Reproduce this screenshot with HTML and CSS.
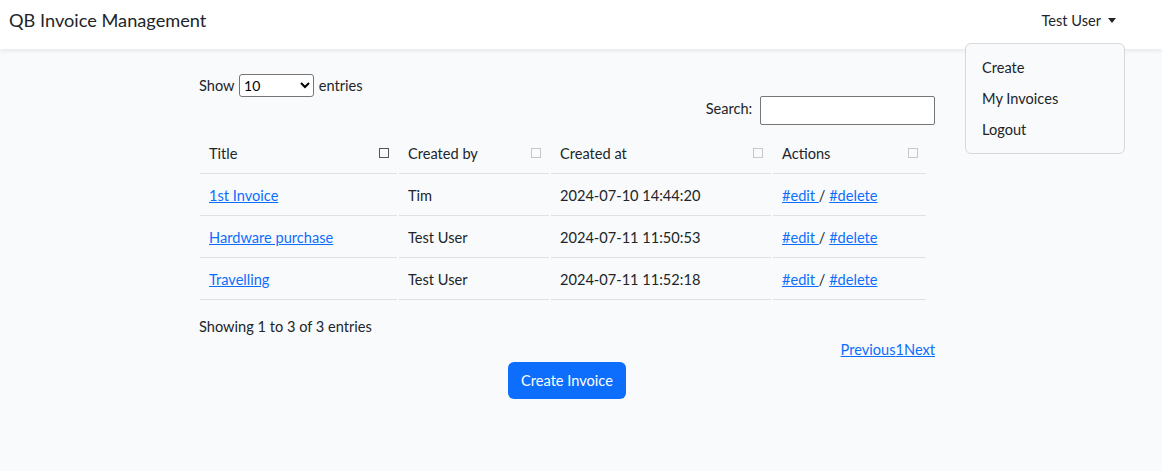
FILE: index.html
```html
<!DOCTYPE html>
<html lang="en">
<head>
<meta charset="utf-8">
<title>QB Invoice Management</title>
<link rel="stylesheet" href="styles.css">
</head>
<body>
<header class="navbar">
  <a class="brand" href="#">QB Invoice Management</a>
  <div class="nav-user">
    <a class="user-toggle" href="#">Test User <span class="caret"></span></a>
    <ul class="dropdown">
      <li><a href="#">Create</a></li>
      <li><a href="#">My Invoices</a></li>
      <li><a href="#">Logout</a></li>
    </ul>
  </div>
</header>
<main class="content">
  <div class="length">
    <label>Show <select class="len-select"><option>10</option><option>25</option><option>50</option><option>100</option></select> entries</label>
  </div>
  <div class="filter">
    <label>Search: <input class="search" type="search"></label>
  </div>
  <table class="grid">
    <thead>
      <tr>
        <th class="c1"><span>Title</span><i class="sort active"></i></th>
        <th class="c2"><span>Created by</span><i class="sort"></i></th>
        <th class="c3"><span>Created at</span><i class="sort"></i></th>
        <th class="c4"><span>Actions</span><i class="sort"></i></th>
      </tr>
    </thead>
    <tbody>
      <tr>
        <td><a href="#">1st Invoice</a></td>
        <td>Tim</td>
        <td>2024-07-10 14:44:20</td>
        <td><a href="#">#edit </a>/ <a href="#">#delete</a></td>
      </tr>
      <tr>
        <td><a href="#">Hardware purchase</a></td>
        <td>Test User</td>
        <td>2024-07-11 11:50:53</td>
        <td><a href="#">#edit </a>/ <a href="#">#delete</a></td>
      </tr>
      <tr>
        <td><a href="#">Travelling</a></td>
        <td>Test User</td>
        <td>2024-07-11 11:52:18</td>
        <td><a href="#">#edit </a>/ <a href="#">#delete</a></td>
      </tr>
    </tbody>
  </table>
  <div class="info">Showing 1 to 3 of 3 entries</div>
  <div class="paging"><a href="#">Previous</a><a href="#">1</a><a href="#">Next</a></div>
  <div class="actions"><a class="btn" href="#">Create Invoice</a></div>
</main>
</body>
</html>
```

FILE: styles.css
```css
* { box-sizing: border-box; }
html, body { margin: 0; padding: 0; }
body {
  font-family: "Lato", "Noto Sans", sans-serif;
  font-size: 14.6px;
  line-height: 1.5;
  color: #212529;
  background: #f8fafc;
}
a { color: #0d6efd; }

.navbar {
  height: 49px;
  background: #fff;
  box-shadow: 0 2px 4px rgba(0,0,0,0.075);
  display: flex;
  align-items: center;
  justify-content: space-between;
  padding: 0 46px 0 9px;
  position: relative;
  z-index: 2;
}
.brand {
  color: #212529;
  text-decoration: none;
  font-size: 18.2px;
  margin-top: -8px;
}
.nav-user { position: relative; margin-top: -8px; }
.user-toggle {
  color: #212529;
  text-decoration: none;
  display: flex;
  align-items: center;
  gap: 7px;
}
.caret {
  display: inline-block;
  width: 0; height: 0;
  border-top: 5px solid #212529;
  border-left: 4px solid transparent;
  border-right: 4px solid transparent;
}
.dropdown {
  position: absolute;
  top: 33px;
  right: -9px;
  width: 160px;
  margin: 0;
  padding: 8px 0;
  list-style: none;
  background: #f8fafc;
  border: 1px solid #d6d8db;
  border-radius: 6px;
}
.dropdown li a {
  display: block;
  padding: 4px 16px;
  line-height: 23px;
  color: #212529;
  text-decoration: none;
}

.content {
  width: 736px;
  margin-left: 199px;
  padding-top: 24px;
}
.length { height: 24px; display: flex; align-items: center; }
.len-select {
  width: 75px;
  height: 23px;
  font: inherit;
  font-size: 14px;
  border: 1px solid #767676;
  border-radius: 3px;
  background: #fff;
  margin: 0 1px;
}
.filter { display: flex; justify-content: flex-end; margin-top: -1px; }
.search {
  width: 175px;
  height: 29px;
  border: 1px solid #767676;
  border-radius: 2px;
  background: #fff;
  margin-left: 4px;
  vertical-align: middle;
}
.grid {
  border-collapse: separate;
  border-spacing: 2px;
  margin: 7px 0 0 -1px;
}
.grid th, .grid td {
  text-align: left;
  font-weight: normal;
  padding: 9px 9px 9px 9px;
  line-height: 21px;
  border-bottom: 1px solid #dee2e6;
}
.grid th { position: relative; padding-right: 30px; }
.c1 { width: 197px; }
.c2 { width: 150px; }
.c3 { width: 220px; }
.c4 { width: 153px; }
.sort {
  position: absolute;
  right: 8px;
  top: 14px;
  width: 10px;
  height: 10px;
  border: 1px solid #c8c8c8;
}
.sort.active { border-color: #555; }
.info { margin-top: 14px; line-height: 22px; }
.paging { text-align: right; line-height: 22px; margin-top: 1px; }
.actions { text-align: center; margin-top: 1px; }
.btn {
  display: inline-block;
  background: #0d6efd;
  color: #fff;
  text-decoration: none;
  padding: 7px 13px;
  line-height: 23px;
  border-radius: 6px;
}
```
